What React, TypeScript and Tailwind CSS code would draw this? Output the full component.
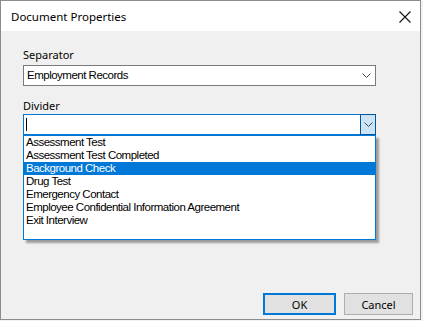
import React from "react";

const ui = { fontFamily: '"Noto Sans", "Open Sans", sans-serif' };
const list = { fontFamily: '"Liberation Sans", Arial, sans-serif' };

function Chevron({ className = "" }: { className?: string }) {
  return (
    <svg width="9" height="5" viewBox="0 0 9 5" className={className}>
      <path d="M0.5 0.5 L4.5 4.5 L8.5 0.5" fill="none" stroke="#444" strokeWidth="1" />
    </svg>
  );
}

export default function App() {
  const items = [
    "Assessment Test",
    "Assessment Test Completed",
    "Background Check",
    "Drug Test",
    "Emergency Contact",
    "Employee Confidential Information Agreement",
    "Exit Interview",
  ];
  return (
    <div className="w-[423px] h-[321px] bg-[#f3f3f3] overflow-hidden">
      <div className="w-[421px] h-[320px] border border-[#8c8c8c] flex flex-col bg-[#f0f0f0]" style={ui}>
        <div className="h-[30px] bg-white flex items-center justify-between pl-[10px] pr-[9px] shrink-0">
          <span className="text-[11.5px] text-black leading-none mt-[2px]">Document Properties</span>
          <svg width="12" height="12" viewBox="0 0 12 12" className="mt-[1px]">
            <path d="M0.5 0.5 L11.5 11.5 M11.5 0.5 L0.5 11.5" stroke="#111" strokeWidth="1.1" />
          </svg>
        </div>
        <div className="flex-1 flex flex-col pl-[22px] pr-[7px] pb-[4px]">
          <div className="w-[353px]">
            <div className="mt-[16px] h-[16px] leading-[16px] text-[11px] text-black">Separator</div>
            <div className="mt-[2px] h-[21px] bg-white border border-[#7a7a7a] flex items-center justify-between pl-[3px] pr-[4px]">
              <span className="text-[11.5px] tracking-[-0.5px] text-black leading-none" style={list}>
                Employment Records
              </span>
              <Chevron />
            </div>
            <div className="mt-[12px] h-[16px] leading-[16px] text-[11px] text-black">Divider</div>
            <div className="relative">
              <div className="h-[21px] bg-white border border-[#0078d7] flex items-stretch">
                <div className="flex-1 flex items-center pl-[2px]">
                  <div className="w-[1px] h-[13px] bg-black" />
                </div>
                <div className="w-[16px] -my-[1px] -mr-[1px] bg-[#cce4f7] border border-[#005499] flex items-center justify-center">
                  <Chevron />
                </div>
              </div>
              <div
                className="absolute left-0 top-[21px] w-[353px] h-[105px] bg-white border border-[#0078d7] shadow-[3px_3px_2px_rgba(0,0,0,0.35)] z-10"
                style={list}
              >
                {items.map((t) => (
                  <div
                    key={t}
                    className={
                      "h-[13px] leading-[13px] text-[11.5px] tracking-[-0.5px] pl-[2px] whitespace-nowrap " +
                      (t === "Background Check" ? "bg-[#0078d7] text-white" : "text-black")
                    }
                  >
                    {t}
                  </div>
                ))}
              </div>
            </div>
          </div>
          <div className="flex-1" />
          <div className="flex justify-end gap-[8px]">
            <button className="w-[73px] h-[22px] bg-[#e1e1e1] border-2 border-[#0078d7] text-[11px] text-black leading-none">
              OK
            </button>
            <button className="w-[69px] h-[22px] bg-[#e1e1e1] border border-[#adadad] text-[11px] text-black leading-none">
              Cancel
            </button>
          </div>
        </div>
      </div>
    </div>
  );
}
